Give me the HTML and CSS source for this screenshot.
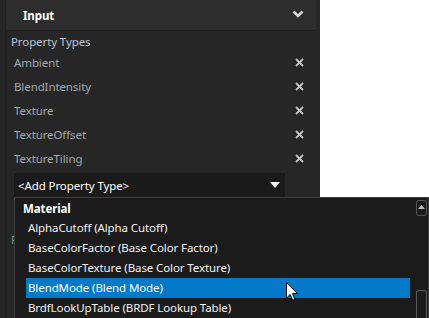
FILE: index.html
```html
<!DOCTYPE html>
<html>
<head>
<meta charset="utf-8">
<link rel="stylesheet" href="styles.css">
</head>
<body>
<div class="panel">
  <div class="inner">
    <div class="header">
      <span class="title">Input</span>
      <svg class="chev" width="12" height="8" viewBox="0 0 12 8"><path d="M1.5 1.5 L6 6 L10.5 1.5" fill="none" stroke="#d8d8d8" stroke-width="2.6"/></svg>
    </div>
    <div class="label">Property Types</div>
    <div class="row"><span>Ambient</span><svg class="x" width="9" height="9" viewBox="0 0 9 9"><path d="M1 1 L8 8 M8 1 L1 8" stroke="#c4c4c4" stroke-width="1.8"/></svg></div>
    <div class="row"><span>BlendIntensity</span><svg class="x" width="9" height="9" viewBox="0 0 9 9"><path d="M1 1 L8 8 M8 1 L1 8" stroke="#c4c4c4" stroke-width="1.8"/></svg></div>
    <div class="row"><span>Texture</span><svg class="x" width="9" height="9" viewBox="0 0 9 9"><path d="M1 1 L8 8 M8 1 L1 8" stroke="#c4c4c4" stroke-width="1.8"/></svg></div>
    <div class="row"><span>TextureOffset</span><svg class="x" width="9" height="9" viewBox="0 0 9 9"><path d="M1 1 L8 8 M8 1 L1 8" stroke="#c4c4c4" stroke-width="1.8"/></svg></div>
    <div class="row"><span>TextureTiling</span><svg class="x" width="9" height="9" viewBox="0 0 9 9"><path d="M1 1 L8 8 M8 1 L1 8" stroke="#c4c4c4" stroke-width="1.8"/></svg></div>
    <div class="combo">
      <span>&lt;Add Property Type&gt;</span>
      <svg class="tri" width="10" height="6" viewBox="0 0 10 6"><path d="M0 0 L10 0 L5 6 Z" fill="#f0f0f0"/></svg>
    </div>
    <div class="below">F</div>
  </div>
</div>
<div class="popup">
  <div class="list">
    <div class="group">Material</div>
    <div class="item">AlphaCutoff (Alpha Cutoff)</div>
    <div class="item">BaseColorFactor (Base Color Factor)</div>
    <div class="item">BaseColorTexture (Base Color Texture)</div>
    <div class="item sel">BlendMode (Blend Mode)</div>
    <div class="item">BrdfLookUpTable (BRDF Lookup Table)</div>
  </div>
  <div class="scroll">
    <div class="up"><svg width="7" height="4" viewBox="0 0 7 4"><path d="M0 4 L3.5 0 L7 4 Z" fill="#bdbdbd"/></svg></div>
    <div class="track"></div>
    <div class="thumb"></div>
  </div>
</div>
<svg class="cursor" width="14" height="20" viewBox="0 0 14 20"><path d="M0.5 0.5 L0.5 16 L4.2 12.4 L6.8 18.3 L9 17.3 L6.5 11.6 L11.5 11.6 Z" fill="#ffffff" stroke="#000000" stroke-width="1"/></svg>
</body>
</html>
```
FILE: styles.css
```css
html, body {
  margin: 0;
  padding: 0;
  background: #ffffff;
  font-family: "Noto Sans", "Open Sans", sans-serif;
  font-size: 11.5px;
  letter-spacing: -0.1px;
  width: 429px;
  height: 318px;
  overflow: hidden;
}
.panel {
  width: 320px;
  height: 318px;
  background: #262626;
  display: flex;
}
.inner {
  margin-left: 5px;
  width: 310px;
  border-left: 1px solid #222222;
}
.header {
  height: 30px;
  background: #2d2d2d;
  border-bottom: 1px solid #1f1f1f;
  display: flex;
  align-items: center;
  justify-content: space-between;
  padding: 0 12px 0 17px;
}
.title {
  color: #ffffff;
  font-weight: bold;
}
.chev { display: block; margin-top: -2px; }
.label {
  color: #b9c4cf;
  padding: 3px 0 0 5px;
  line-height: 16px;
  height: 16px;
}
.row {
  height: 24px;
  display: flex;
  align-items: center;
  justify-content: space-between;
  padding: 0 12px 0 8px;
  color: #a3a9ae;
}
.combo {
  margin: 3px 0 0 8px;
  width: 271px;
  height: 24px;
  background: #1a1a1a;
  display: flex;
  align-items: center;
  justify-content: space-between;
  padding: 0 5px 0 4px;
  box-sizing: border-box;
  color: #ffffff;
}
.tri { display: block; }
.below {
  color: #8a8a8a;
  padding: 35px 0 0 5px;
}
.popup {
  position: absolute;
  left: 14px;
  top: 197px;
  width: 415px;
  height: 121px;
  box-sizing: border-box;
  background: #1b1b1b;
  border-top: 1px solid #3e3e3e;
  border-left: 1px solid #3e3e3e;
  border-right: 1px solid #3e3e3e;
  display: flex;
}
.list {
  flex: 1;
  padding-top: 1px;
}
.group {
  height: 19px;
  line-height: 19px;
  color: #ffffff;
  font-weight: bold;
  padding-left: 8px;
}
.item {
  height: 20px;
  line-height: 20px;
  margin-left: 11px;
  width: 384px;
  padding-left: 2px;
  box-sizing: border-box;
  color: #f2f2f2;
  white-space: nowrap;
}
.item.sel {
  background: #0479c9;
  color: #ffffff;
}
.scroll {
  width: 11px;
  margin-right: 1px;
  display: flex;
  flex-direction: column;
  padding-top: 2px;
}
.up {
  height: 16px;
  border: 1px solid #575757;
  border-radius: 3px;
  box-sizing: border-box;
  display: flex;
  justify-content: center;
  padding-top: 4px;
}
.up svg { display: block; }
.track { height: 74px; }
.thumb {
  flex: 1;
  border: 1px solid #575757;
  border-radius: 3px 3px 0 0;
  border-bottom: none;
}
.cursor {
  position: absolute;
  left: 286px;
  top: 282px;
}
```
